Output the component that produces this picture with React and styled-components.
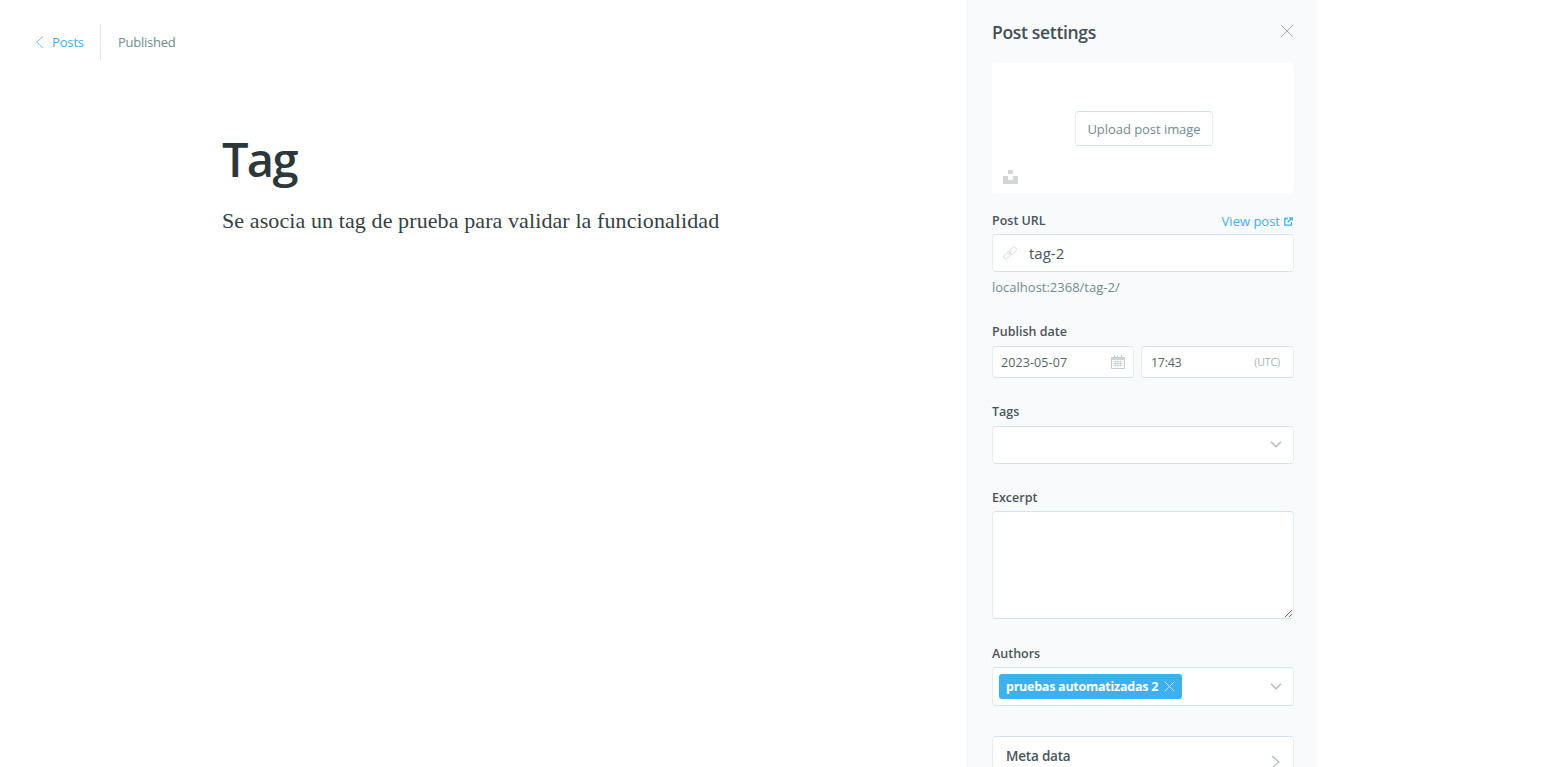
import React from "react";
import styled, { createGlobalStyle } from "styled-components";

const GlobalStyle = createGlobalStyle`
  *, *::before, *::after { box-sizing: border-box; }
  body {
    margin: 0;
    background: #fff;
    color: #394047;
    font-family: "Open Sans", "Noto Sans", sans-serif;
    overflow: hidden;
  }
  svg { display: block; flex: none; }
`;

const Page = styled.div`
  display: flex;
  width: 1317px;
  height: 767px;
  overflow: hidden;
`;

const Editor = styled.main`
  flex: 1;
  display: flex;
  flex-direction: column;
`;

const TopBar = styled.header`
  display: flex;
  align-items: center;
  height: 36px;
  margin: 24px 0 0 35px;
  font-size: 13px;
`;

const BackLink = styled.a`
  display: flex;
  align-items: center;
  gap: 7px;
  width: 66px;
  height: 36px;
  border-right: 1px solid #dfe8ef;
  color: #3eb0ef;
  letter-spacing: -0.15px;
`;

const Status = styled.span`
  margin-left: 17px;
  color: #738a94;
  letter-spacing: -0.25px;
`;

const Article = styled.article`
  padding: 67px 0 0 222px;
`;

const Title = styled.h1`
  margin: 0;
  height: 64px;
  line-height: 64px;
  font-size: 47px;
  font-weight: 600;
  letter-spacing: -1.7px;
  color: #2c373b;
`;

const Body = styled.p`
  margin: 14px 0 0;
  line-height: 32px;
  font-family: "Liberation Serif", serif;
  font-size: 22px;
  letter-spacing: 0.1px;
  white-space: nowrap;
  color: #343f44;
`;

const Panel = styled.aside`
  display: flex;
  flex-direction: column;
  width: 350px;
  padding: 0 23px 0 24px;
  border-left: 1px solid #edf3f7;
  background: #f8fafc;
`;

const PanelHeader = styled.div`
  display: flex;
  flex: none;
  align-items: center;
  justify-content: space-between;
  height: 63px;
`;

const PanelTitle = styled.h2`
  margin: 0;
  font-size: 17.5px;
  font-weight: 600;
  letter-spacing: -0.32px;
  color: #444f55;
`;

const CloseButton = styled.span`
  padding-bottom: 1px;
`;

const ImageUploader = styled.div`
  display: grid;
  grid-template-rows: 48px 35px 1fr;
  flex: none;
  justify-items: center;
  height: 130px;
  border-radius: 4px;
  background: #fff;
`;

const UploadButton = styled.button`
  grid-row: 2;
  width: 138px;
  height: 35px;
  margin-left: 2px;
  padding: 0;
  border: 1px solid;
  border-color: #d3e0e7 #e6eef3;
  border-radius: 4px;
  background: #fff;
  font: 400 13px "Open Sans", sans-serif;
  letter-spacing: -0.05px;
  color: #738a94;
  white-space: nowrap;
`;

const UnsplashMark = styled.div`
  grid-row: 3;
  justify-self: start;
  padding: 24px 0 0 11px;
`;

const Field = styled.section`
  display: flex;
  flex: none;
  flex-direction: column;
  gap: ${(p) => p.$gap ?? 4}px;
  margin-top: ${(p) => p.$top}px;
`;

const LabelRow = styled.div`
  display: flex;
  justify-content: space-between;
  height: 20px;
  line-height: 22px;
`;

const Label = styled.label`
  font-size: 12.5px;
  font-weight: 600;
  letter-spacing: 0;
  color: #4a555b;
`;

const ViewLink = styled.a`
  display: flex;
  align-items: center;
  gap: 4px;
  padding: 2px 1px 0 0;
  font-size: 13px;
  letter-spacing: 0;
  color: #3eb0ef;
`;

const Control = styled.div`
  display: flex;
  align-items: center;
  justify-content: space-between;
  width: ${(p) => (p.$width ? p.$width + "px" : "100%")};
  height: ${(p) => p.$height ?? 38}px;
  padding: ${(p) => p.$pad ?? "0 12px"};
  border: 1px solid;
  border-color: #d3e2ea #e4edf3;
  border-radius: 4px;
  background: #fff;
`;

const SlugText = styled.span`
  flex: 1;
  margin-left: 12px;
  font-size: 15px;
  letter-spacing: 0;
  color: #4a555b;
`;

const Help = styled.p`
  margin: 1px 0 0;
  height: 20px;
  line-height: 20px;
  font-size: 13px;
  letter-spacing: 0;
  color: #738a94;
`;

const DateRow = styled.div`
  display: flex;
  gap: 7px;
`;

const DateText = styled.span`
  font-size: 12.5px;
  letter-spacing: ${(p) => p.$track ?? 0}px;
  color: #56636a;
`;

const Zone = styled.span`
  font-size: 10.5px;
  letter-spacing: -0.1px;
  color: #a5b3ba;
`;

const Textarea = styled.textarea`
  display: block;
  width: 100%;
  height: 108px;
  margin: 0;
  border: 1px solid;
  border-color: #d3e2ea #e4edf3;
  border-radius: 4px;
  background: #fff;
  resize: vertical;
`;

const Token = styled.span`
  display: flex;
  align-items: center;
  gap: 6px;
  width: 183px;
  height: 25px;
  padding: 0 7px;
  border-radius: 3px;
  background: #3eb0ef;
  color: #fff;
  font-size: 12.5px;
  font-weight: 700;
  letter-spacing: -0.25px;
  white-space: nowrap;
`;

const MetaButton = styled.div`
  display: flex;
  flex: none;
  justify-content: space-between;
  height: 58px;
  margin-top: 30px;
  padding: 9px 13px 0 13px;
  border: 1px solid;
  border-color: #d3e2ea #e4edf3;
  border-radius: 4px;
  background: #fff;
`;

const MetaLabel = styled.span`
  font-size: 13.5px;
  line-height: 20px;
  font-weight: 600;
  letter-spacing: -0.2px;
  color: #4a555b;
`;

const MetaArrow = styled.span`
  padding-top: 9px;
`;

const Cross = ({ size, color }) => (
  <svg width={size} height={size} viewBox="0 0 14 14" fill="none" stroke={color} strokeWidth={14 / size}>
    <path d="M1 1l12 12M13 1L1 13" />
  </svg>
);

const ChevronDown = () => (
  <svg width="12" height="7" viewBox="0 0 12 7" fill="none" stroke="#a9b9c1" strokeWidth="1.3">
    <path d="M1 .8l5 5 5-5" />
  </svg>
);

const Calendar = () => (
  <svg width="14" height="14" viewBox="0 0 14 14" fill="none" stroke="#c3cbcf">
    <path d="M.5 2.5h13v11H.5zM3.5 0v3M10.5 0v3M6.5 1v2" />
    <path d="M.5 4h13" strokeWidth="1.6" />
    <path d="M2.5 6.5h9M2.5 8.5h9M2.5 10.5h9M4.5 5.5v6M7 5.5v6M9.5 5.5v6" strokeWidth=".7" />
  </svg>
);

const LinkIcon = () => (
  <svg width="14" height="14" viewBox="0 0 24 24" fill="none" stroke="#d3dfe6" strokeWidth="1.6">
    <rect x="9.5" y="4.2" width="14.5" height="7.6" rx="3.8" transform="rotate(-45 16.75 8)" />
    <rect x="0" y="12.2" width="14.5" height="7.6" rx="3.8" transform="rotate(-45 7.25 16)" />
    <path d="M8.5 15.5l7-7" />
  </svg>
);

export default function App() {
  return (
    <>
      <GlobalStyle />
      <Page>
        <Editor>
          <TopBar>
            <BackLink>
              <svg width="10" height="14" viewBox="0 0 10 14" fill="none" stroke="#65c0f2">
                <path d="M8 1.5L1.7 7.2l6.3 5.6" />
              </svg>
              Posts
            </BackLink>
            <Status>Published</Status>
          </TopBar>
          <Article>
            <Title>Tag</Title>
            <Body>Se asocia un tag de prueba para validar la funcionalidad</Body>
          </Article>
        </Editor>
        <Panel>
          <PanelHeader>
            <PanelTitle>Post settings</PanelTitle>
            <CloseButton>
              <Cross size={14} color="#a3abb0" />
            </CloseButton>
          </PanelHeader>
          <ImageUploader>
            <UploadButton>Upload post image</UploadButton>
            <UnsplashMark>
              <svg width="15" height="14" viewBox="0 0 15 14" fill="#d3d5d6">
                <path d="M5 0h5v4H5zM0 6h5v4h5V6h5v8H0z" />
              </svg>
            </UnsplashMark>
          </ImageUploader>
          <Field $top={17}>
            <LabelRow>
              <Label>Post URL</Label>
              <ViewLink>
                View post
                <svg width="9" height="9" viewBox="0 0 9 9" fill="none" stroke="#3eb0ef" strokeWidth="1.3">
                  <path d="M4 1.5H.8v6.7h6.7V5M3.7 5.3L8 1M5.2.8h3v3" />
                </svg>
              </ViewLink>
            </LabelRow>
            <Control $pad="0 9px 0 10px">
              <LinkIcon />
              <SlugText>tag-2</SlugText>
            </Control>
            <Help>localhost:2368/tag-2/</Help>
          </Field>
          <Field $top={24} $gap={5}>
            <LabelRow><Label>Publish date</Label></LabelRow>
            <DateRow>
              <Control $width={142} $height={32} $pad="0 8px">
                <DateText $track={0.1}>2023-05-07</DateText>
                <Calendar />
              </Control>
              <Control $width={153} $height={32} $pad="0 13px 0 9px">
                <DateText $track={-0.3}>17:43</DateText>
                <Zone>(UTC)</Zone>
              </Control>
            </DateRow>
          </Field>
          <Field $top={23} $gap={5}>
            <LabelRow><Label>Tags</Label></LabelRow>
            <Control $pad="0 11px 2px">
              <span />
              <ChevronDown />
            </Control>
          </Field>
          <Field $top={23}>
            <LabelRow><Label>Excerpt</Label></LabelRow>
            <Textarea />
          </Field>
          <Field $top={24}>
            <LabelRow><Label>Authors</Label></LabelRow>
            <Control $height={39} $pad="0 11px 0 6px">
              <Token>
                pruebas automatizadas 2
                <Cross size={11} color="#c5e7fa" />
              </Token>
              <ChevronDown />
            </Control>
          </Field>
          <MetaButton>
            <MetaLabel>Meta data</MetaLabel>
            <MetaArrow>
              <svg width="9" height="14" viewBox="0 0 9 14" fill="none" stroke="#a9b9c1" strokeWidth="1.1">
                <path d="M1 1l7 6-7 6" />
              </svg>
            </MetaArrow>
          </MetaButton>
        </Panel>
      </Page>
    </>
  );
}
